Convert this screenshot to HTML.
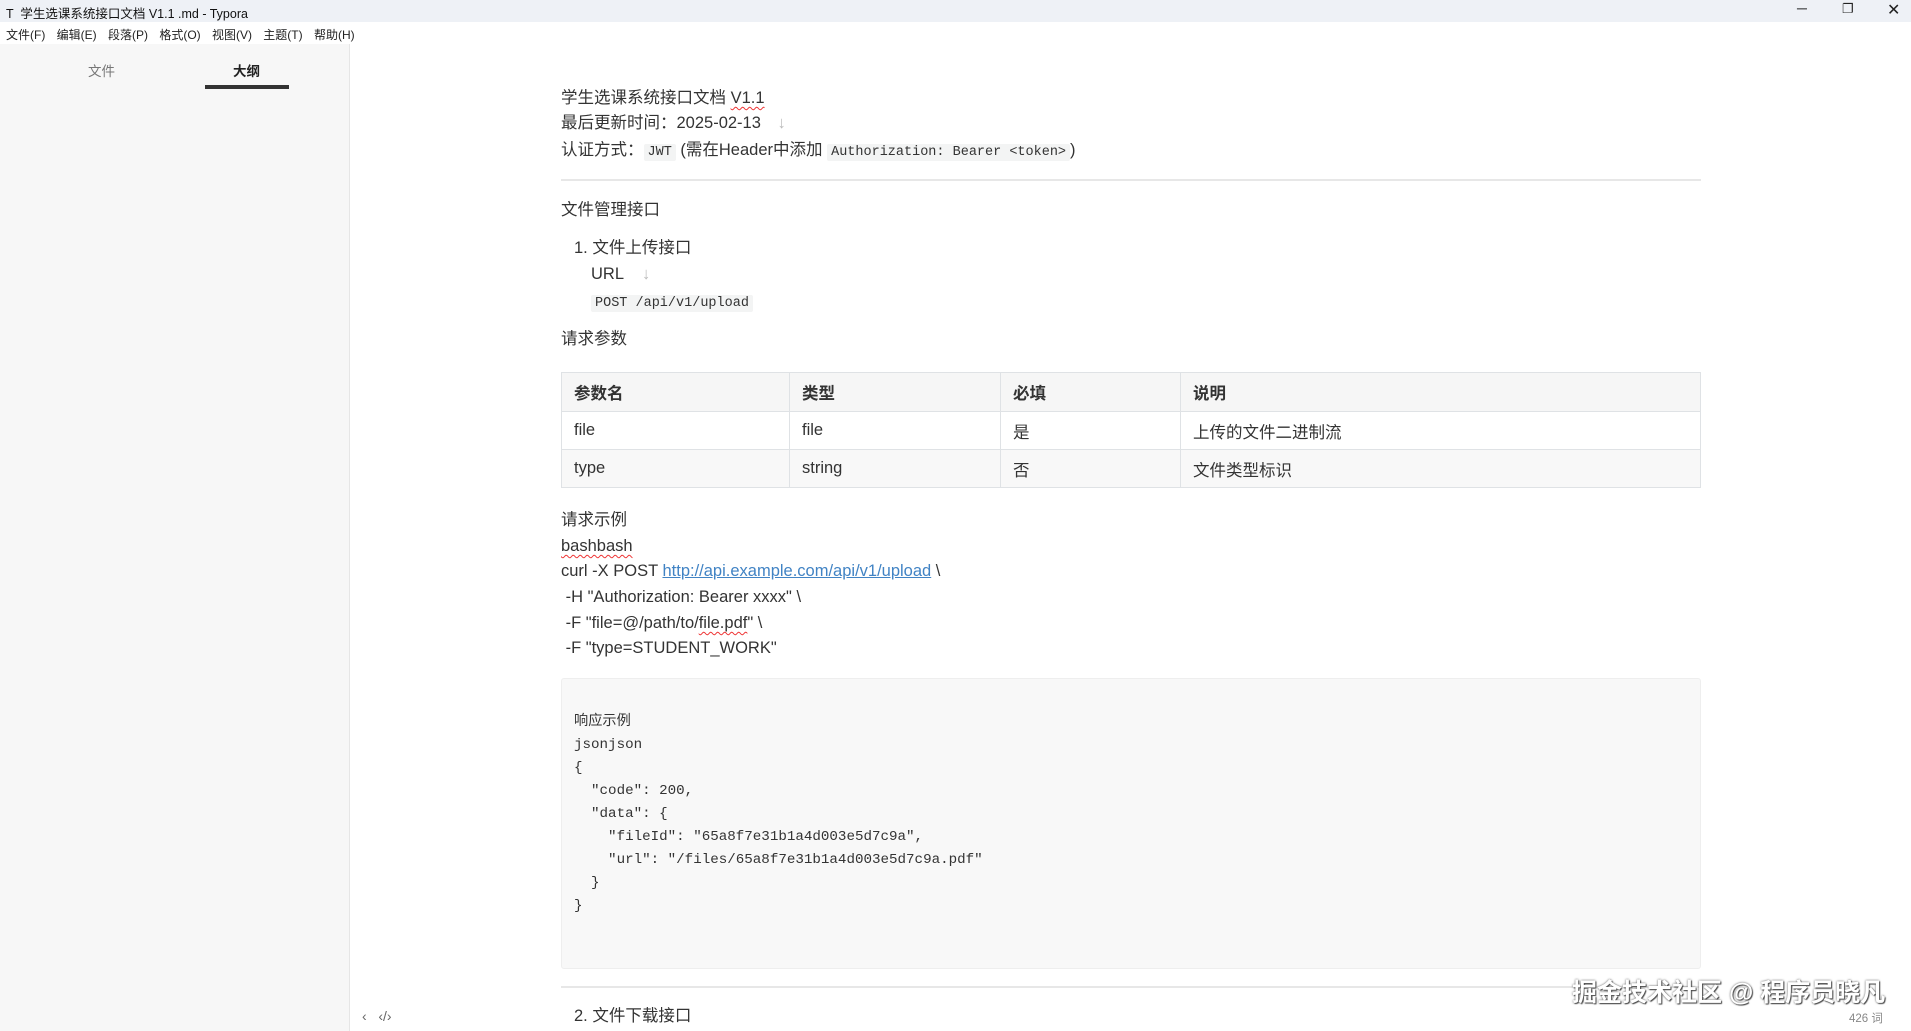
<!DOCTYPE html>
<html><head><meta charset="utf-8"><style>
*{margin:0;padding:0;box-sizing:border-box}
body{width:1911px;height:1031px;overflow:hidden;background:#fff;font-family:"Liberation Sans","Noto Sans CJK SC",sans-serif;color:#333;position:relative}
.a{position:absolute;white-space:nowrap}
.t{font-size:16.5px;line-height:20px}
.m{font-family:"Liberation Mono","Noto Sans CJK SC",monospace;font-size:14.2px}
code{font-family:"Liberation Mono",monospace;font-size:13.5px;background:#f3f4f4;padding:1px 4px;border-radius:2px}
.sq{text-decoration:underline wavy #e33;text-decoration-thickness:1px;text-underline-offset:3px}
table{border-collapse:collapse;font-size:16.5px}
td,th{border:1px solid #dfe2e5;padding:0 12px;text-align:left;height:38px;vertical-align:middle}
th{font-weight:bold;background:#f6f6f6;height:39px}
tr.g td{background:#f8f8f8}
</style></head><body>
<div class="a" style="left:0;top:0;width:1911px;height:22px;background:#eef1f6"></div>
<div class="a" style="left:6px;top:3px;font-size:12.5px;color:#111">T &nbsp;学生选课系统接口文档 V1.1 .md - Typora</div>
<div class="a" style="left:1797px;top:0;font-size:14px;color:#222">─</div>
<div class="a" style="left:1842px;top:1px;font-size:13px;color:#222">❐</div>
<div class="a" style="left:1887px;top:0px;font-size:16px;color:#222">✕</div>
<div class="a" style="left:6px;top:26px;font-size:12px;color:#222;word-spacing:8px">文件(F) 编辑(E) 段落(P) 格式(O) 视图(V) 主题(T) 帮助(H)</div>
<div class="a" style="left:0;top:44px;width:350px;height:987px;background:#f7f7f7;border-right:1px solid #e6e6e6"></div>
<div class="a" style="left:88px;top:60px;font-size:13.5px;color:#777">文件</div>
<div class="a" style="left:233px;top:60px;font-size:13.5px;color:#222;font-weight:bold">大纲</div>
<div class="a" style="left:205px;top:85px;width:84px;height:4px;background:#333"></div>
<div class="a" style="left:362px;top:1008px;font-size:14px;color:#666">‹ &nbsp; ‹/›</div>

<div class="a t" style="left:561px;top:88px">学生选课系统接口文档 <span class="sq">V1.1</span></div>
<div class="a t" style="left:561px;top:113px">最后更新时间：2025-02-13 <span style="color:#bbb;margin-left:12px">↓</span></div>
<div class="a t" style="left:561px;top:140px">认证方式：<code>JWT</code> (需在Header中添加 <code>Authorization: Bearer &lt;token&gt;</code>)</div>
<div class="a" style="left:561px;top:179px;width:1140px;height:2px;background:#e7e7e7"></div>
<div class="a t" style="left:561px;top:200px">文件管理接口</div>
<div class="a t" style="left:574px;top:238px">1. 文件上传接口</div>
<div class="a t" style="left:591px;top:264px">URL <span style="color:#bbb;margin-left:14px">↓</span></div>
<div class="a t" style="left:591px;top:291px"><code>POST /api/v1/upload</code></div>
<div class="a t" style="left:561px;top:329px">请求参数</div>
<table class="a" style="left:561px;top:372px;width:1140px">
<tr><th style="width:228px">参数名</th><th style="width:211px">类型</th><th style="width:180px">必填</th><th>说明</th></tr>
<tr><td>file</td><td>file</td><td>是</td><td>上传的文件二进制流</td></tr>
<tr class="g"><td>type</td><td>string</td><td>否</td><td>文件类型标识</td></tr>
</table>
<div class="a t" style="left:561px;top:510px">请求示例</div>
<div class="a t" style="left:561px;top:536px"><span class="sq">bashbash</span></div>
<div class="a t" style="left:561px;top:561px">curl -X POST <span style="color:#4183c4;text-decoration:underline">http://api.example.com/api/v1/upload</span> \</div>
<div class="a t" style="left:561px;top:587px">&nbsp;-H "Authorization: Bearer xxxx" \</div>
<div class="a t" style="left:561px;top:613px">&nbsp;-F "file=@/path/to/<span class="sq">file.pdf</span>" \</div>
<div class="a t" style="left:561px;top:638px">&nbsp;-F "type=STUDENT_WORK"</div>
<div class="a" style="left:561px;top:678px;width:1140px;height:291px;background:#f8f8f8;border:1px solid #eee;border-radius:3px"></div>
<div class="a m" style="left:574px;top:709px;line-height:23px;white-space:pre;color:#333"><span style="font-family:'Noto Sans CJK SC',sans-serif">响应示例</span>
jsonjson
{
  "code": 200,
  "data": {
    "fileId": "65a8f7e31b1a4d003e5d7c9a",
    "url": "/files/65a8f7e31b1a4d003e5d7c9a.pdf"
  }
}</div>
<div class="a" style="left:561px;top:986px;width:1140px;height:2px;background:#e7e7e7"></div>
<div class="a t" style="left:574px;top:1006px">2. 文件下载接口</div>
<div class="a" style="left:1572px;top:973px;font-size:25px;color:#fff;font-weight:bold;text-shadow:0 0 2px #555,1px 1px 1px #444">掘金技术社区 @ 程序员晓凡</div>
<div class="a" style="left:1849px;top:1010px;font-size:11.5px;color:#888">426 词</div>
</body></html>
